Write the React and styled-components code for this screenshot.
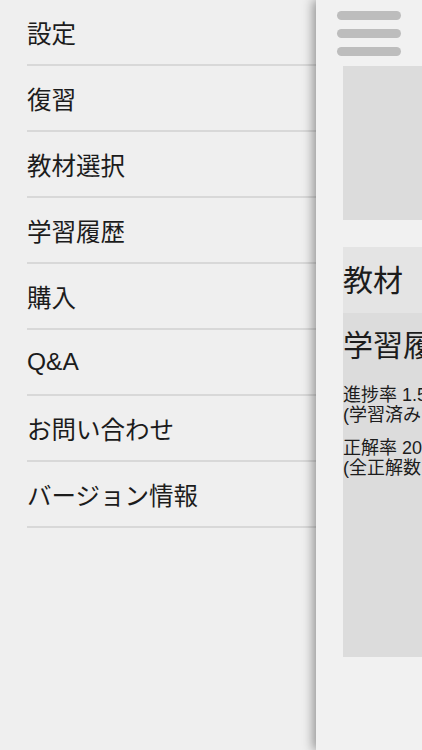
import React from "react";
import styled, { createGlobalStyle } from "styled-components";

const Global = createGlobalStyle`
  html, body { margin: 0; padding: 0; background: #efefef; }
  body { font-family: "Liberation Sans", "Noto Sans CJK JP", sans-serif; color: #1c1c1c; }
  #root { width: 422px; height: 750px; overflow: hidden; }
`;

const Screen = styled.div`
  display: flex;
  width: 422px;
  height: 750px;
  overflow: hidden;
  background: #efefef;
`;

const Menu = styled.nav`
  flex: 0 0 316px;
  width: 316px;
  padding-left: 27px;
  box-sizing: border-box;
  display: flex;
  flex-direction: column;
`;

const MenuItem = styled.div`
  height: 64px;
  border-bottom: 2px solid #d8d8d8;
  display: flex;
  align-items: center;
  font-size: 24.5px;
  white-space: nowrap;
`;

const Panel = styled.main`
  flex: 0 0 422px;
  width: 422px;
  height: 750px;
  background: #f1f1f1;
  box-shadow: -3px 0 10px rgba(0, 0, 0, 0.38);
  position: relative;
  z-index: 1;
  display: flex;
  flex-direction: column;
  padding: 11px 0 0 27px;
  box-sizing: border-box;
`;

const Hamburger = styled.div`
  display: flex;
  flex-direction: column;
  gap: 9px;
  margin-left: -6px;
  width: 64px;
`;

const Bar = styled.span`
  display: block;
  height: 9px;
  border-radius: 5px;
  background: #bdbdbd;
`;

const Banner = styled.div`
  margin-top: 10px;
  height: 154px;
  background: #dcdcdc;
  width: 500px;
`;

const MaterialBox = styled.div`
  margin-top: 27px;
  height: 66px;
  background: #e4e4e4;
  width: 500px;
  display: flex;
  align-items: center;
  font-size: 30px;
  white-space: nowrap;
  padding-bottom: 4px;
  box-sizing: border-box;
`;

const HistoryBox = styled.div`
  height: 344px;
  background: #dcdcdc;
  width: 500px;
  padding-top: 15px;
  box-sizing: border-box;
  white-space: nowrap;
`;

const HistoryTitle = styled.div`
  font-size: 30px;
  line-height: 36px;
  margin-bottom: 21px;
`;

const Stat = styled.p`
  margin: 0 0 13px;
  font-size: 18px;
  line-height: 20px;
`;

const items = ["設定", "復習", "教材選択", "学習履歴", "購入", "Q&A", "お問い合わせ", "バージョン情報"];

export default function App() {
  return (
    <>
      <Global />
      <Screen>
        <Menu>
          {items.map((t) => (
            <MenuItem key={t}>{t}</MenuItem>
          ))}
        </Menu>
        <Panel>
          <Hamburger>
            <Bar />
            <Bar />
            <Bar />
          </Hamburger>
          <Banner />
          <MaterialBox>教材</MaterialBox>
          <HistoryBox>
            <HistoryTitle>学習履歴</HistoryTitle>
            <Stat>
              進捗率 1.5%
              <br />
              (学習済み問題数 / 全問題数)
            </Stat>
            <Stat>
              正解率 20.0%
              <br />
              (全正解数 / 学習済み問題数)
            </Stat>
          </HistoryBox>
        </Panel>
      </Screen>
    </>
  );
}
